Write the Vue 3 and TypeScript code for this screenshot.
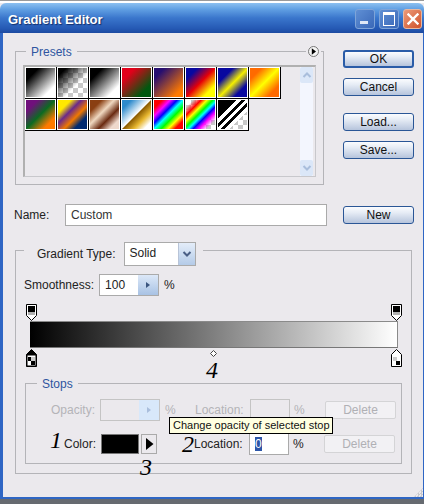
<script setup lang="ts">
const checker = 'conic-gradient(#c8c8c8 25%,#fff 0 50%,#c8c8c8 0 75%,#fff 0) 0 0/10px 10px'
const swatches: string[] = [
  'linear-gradient(135deg,#000 22%,#fff 80%)',
  `linear-gradient(135deg,#000 14%,rgba(0,0,0,0) 62%),${checker}`,
  'linear-gradient(135deg,#000 22%,#fff 80%)',
  'linear-gradient(135deg,#e2001a 22%,#00580f 78%)',
  'linear-gradient(135deg,#260e70 18%,#ff7a00 84%)',
  'linear-gradient(135deg,#0808a0 20%,#e60008 50%,#ffff00 80%)',
  'linear-gradient(135deg,#0808a0 26%,#f6f000 52%,#0808a0 78%)',
  'linear-gradient(135deg,#ff6a00 20%,#ffff00 50%,#ff6a00 80%)',
  'linear-gradient(135deg,#70107c 20%,#0c6a22 50%,#ff7a00 80%)',
  'linear-gradient(135deg,#ffe800 22%,#6a2a8a 40%,#f07800 60%,#002a70 78%)',
  'linear-gradient(135deg,#8a3f12 20%,#f0d8c0 42%,#6a2a10 64%,#efd9cc 84%)',
  'linear-gradient(135deg,#2d8acc 16%,#fff 49%,#8a5a00 51%,#e8b830 70%,#fff 88%)',
  'linear-gradient(135deg,#ff0000 14%,#ff00ff 28%,#0000ff 40%,#00ffff 50%,#00ff00 62%,#ffff00 74%,#ff0000 86%)',
  `linear-gradient(135deg,rgba(255,0,0,0) 12%,#ff0000 26%,#ffff00 36%,#00ff00 46%,#00ffff 54%,#0000ff 62%,#ff00ff 72%,rgba(255,0,255,0) 86%),${checker}`,
  `linear-gradient(135deg,#000 32%,#fff 32% 40%,#000 40% 47%,#fff 47% 55%,#000 55% 62%,#fff 62% 70%,rgba(0,0,0,0) 70%),${checker}`,
]
const sideButtons = [
  { label: 'OK', cls: 'default', gap: 'gap-s' },
  { label: 'Cancel', cls: '', gap: 'gap-l' },
  { label: 'Load...', cls: '', gap: 'gap-s' },
  { label: 'Save...', cls: '', gap: '' },
]
</script>

<template>
  <div class="window">
    <div class="strip"></div>
    <header class="titlebar">
      <span class="title">Gradient Editor</span>
      <div class="controls">
        <span class="ctl"><i class="min"></i></span>
        <span class="ctl"><i class="max"></i></span>
        <span class="ctl close">
          <svg width="12" height="12" viewBox="0 0 12 12"><path d="M1.5 1.5 10.5 10.5M10.5 1.5 1.5 10.5" stroke="#fff" stroke-width="2.4" stroke-linecap="square" /></svg>
        </span>
      </div>
    </header>

    <main class="body">
      <section class="top">
        <div class="group presets">
          <div class="legend-row">
            <span class="legend">Presets</span>
            <span class="menu-btn">
              <svg width="11" height="11" viewBox="0 0 11 11"><circle cx="5.5" cy="5.5" r="5" fill="#f4f4f4" stroke="#777" /><path d="M3.8 2.2 8 5.5 3.8 8.8Z" fill="#000" /></svg>
            </span>
          </div>
          <div class="listbox">
            <div class="swatch-grid">
              <div v-for="(s, i) in swatches" :key="i" class="cell">
                <div class="swatch" :style="{ background: s }"></div>
              </div>
            </div>
            <div class="scroll">
              <span class="scroll-btn">
                <svg width="10" height="8" viewBox="0 0 10 8"><path d="M1.5 6 5 2.5 8.5 6" fill="none" stroke="#a9bedc" stroke-width="2" /></svg>
              </span>
              <span class="scroll-btn">
                <svg width="10" height="8" viewBox="0 0 10 8"><path d="M1.5 2 5 5.5 8.5 2" fill="none" stroke="#a9bedc" stroke-width="2" /></svg>
              </span>
            </div>
          </div>
        </div>
        <div class="side">
          <button v-for="b in sideButtons" :key="b.label" class="btn" :class="[b.cls, b.gap]">{{ b.label }}</button>
        </div>
      </section>

      <section class="name-row">
        <label class="name-label">Name:</label>
        <div class="field name-input">Custom</div>
        <button class="btn new">New</button>
      </section>

      <section class="group gradient">
        <div class="type-row">
          <span>Gradient Type:</span>
          <div class="select">
            <span class="select-val">Solid</span>
            <span class="select-btn">
              <svg width="10" height="8" viewBox="0 0 10 8"><path d="M1.5 2 5 5.5 8.5 2" fill="none" stroke="#4a5f85" stroke-width="2" /></svg>
            </span>
          </div>
        </div>

        <div class="smooth-row">
          <span>Smoothness:</span>
          <div class="field spin">
            <span class="spin-val">100</span>
            <span class="spin-btn">
              <svg width="6" height="8" viewBox="0 0 6 8"><path d="M1 1 5 4 1 7Z" fill="#3b557f" /></svg>
            </span>
          </div>
          <span>%</span>
        </div>

        <div class="bar-area">
          <div class="bar"></div>
          <svg class="stop st-tl" width="11" height="17" viewBox="0 0 11 17">
            <path d="M.5.5h10v11l-5 5-5-5Z" fill="#fff" stroke="#000" />
            <rect x="2" y="2" width="7" height="6" fill="#000" />
            <rect x="2" y="8" width="7" height="3" fill="#b0b0b0" />
          </svg>
          <svg class="stop st-tr" width="11" height="17" viewBox="0 0 11 17">
            <path d="M.5.5h10v11l-5 5-5-5Z" fill="#fff" stroke="#000" />
            <rect x="2" y="2" width="7" height="6" fill="#000" />
            <rect x="2" y="8" width="7" height="3" fill="#b0b0b0" />
          </svg>
          <svg class="stop st-bl" width="11" height="18" viewBox="0 0 11 18">
            <path d="M5.5.5l5 5v12H.5v-12Z" fill="#000" stroke="#000" />
            <rect x="1.500" y="6.500" width="8" height="10" fill="#fff" />
            <rect x="2" y="8" width="4" height="4" fill="#000" />
            <rect x="5" y="12" width="4" height="4" fill="#000" />
            <rect x="5" y="8" width="4" height="4" fill="#ccc" />
          </svg>
          <svg class="stop st-br" width="11" height="18" viewBox="0 0 11 18">
            <path d="M5.5.5l5 5v12H.5v-12Z" fill="#fff" stroke="#000" />
            <rect x="2" y="8" width="4" height="4" fill="#ccc" />
            <rect x="5" y="12" width="4" height="4" fill="#000" />
          </svg>
          <svg class="stop st-mid" width="7" height="7" viewBox="0 0 7 7"><path d="M3.5.5l3 3-3 3-3-3Z" fill="#fff" stroke="#444" /></svg>
        </div>

        <div class="group stops">
          <span class="legend stops-legend">Stops</span>
          <div class="stop-row r1">
            <span class="lab dim">Opacity:</span>
            <div class="field val dimbox spin">
              <span class="spin-val"></span>
              <span class="spin-btn dim-btn">
                <svg width="6" height="8" viewBox="0 0 6 8"><path d="M1 1 5 4 1 7Z" fill="#a9bedc" /></svg>
              </span>
            </div>
            <span class="pct dim">%</span>
            <span class="loc dim">Location:</span>
            <div class="field locbox dimbox"></div>
            <span class="pct2 dim">%</span>
            <button class="del">Delete</button>
          </div>
          <div class="stop-row r2">
            <span class="lab">Color:</span>
            <div class="color-well"></div>
            <span class="color-arrow">
              <svg width="9" height="12" viewBox="0 0 9 12"><path d="M1 0 8.500 6 1 12Z" fill="#000" /></svg>
            </span>
            <span class="loc">Location:</span>
            <div class="field locbox"><span class="sel">0</span></div>
            <span class="pct2">%</span>
            <button class="del">Delete</button>
          </div>
        </div>
      </section>
    </main>
    <div class="under"></div>

    <span class="note n1">1</span>
    <span class="note n2">2</span>
    <span class="note n3">3</span>
    <span class="note n4">4</span>
    <div class="tooltip">Change opacity of selected stop</div>
    <div class="grip"></div>
  </div>
</template>

<style scoped>
.window {
  position: relative;
  width: 424px;
  height: 504px;
  display: flex;
  flex-direction: column;
  overflow: hidden;
  background: #ebe9ed;
  font-family: "Liberation Sans", Arial, sans-serif;
  font-size: 12px;
  color: #222;
}
.strip {
  height: 3px;
  background: linear-gradient(#9a9a9a 0 1px, #fff 1px);
}
.titlebar {
  height: 30px;
  flex: none;
  display: flex;
  align-items: center;
  justify-content: space-between;
  padding: 2px 2px 0 8px;
  box-sizing: border-box;
  border-radius: 6px 6px 0 0;
  background: linear-gradient(#8cc0f0 0, #5f9ee2 22%, #3a76cc 50%, #2559b4 85%, #1c4aa0 100%);
}
.title {
  font-size: 13px;
  font-weight: bold;
  color: #fff;
  text-shadow: 1px 1px 1px #14306c;
}
.controls {
  display: flex;
  gap: 4px;
  margin-top: -1px;
}
.ctl {
  width: 20px;
  height: 20px;
  box-sizing: border-box;
  display: flex;
  align-items: center;
  justify-content: center;
  border-radius: 3px;
  border: 1px solid #7fa4d8;
  background: linear-gradient(135deg, #5f8fd4, #3a68b8);
}
.ctl.close {
  width: 19px;
  background: linear-gradient(135deg, #ec9a78, #d0522c);
  border-color: #e8b8a0;
}
.min {
  width: 8px;
  height: 3px;
  margin-top: 8px;
  margin-right: 2px;
  background: #dfe8f6;
}
.max {
  width: 10px;
  height: 10px;
  border: 1px solid #fff;
  border-top-width: 3px;
}
.body {
  flex: 1;
  min-height: 0;
  box-sizing: border-box;
  padding: 18px 0 0 12px;
  border-left: 3px solid #2f66c4;
  border-right: 1px solid #2f66c4;
  border-bottom: 2px solid #2f66c4;
}
.under {
  height: 5px;
  flex: none;
  background: #666a70;
}
.group {
  box-sizing: border-box;
  border: 1px solid #b4b4b8;
}
.top {
  display: flex;
  align-items: flex-start;
}
.presets {
  width: 309px;
  height: 134px;
  padding: 0 7px;
}
.legend-row {
  height: 13px;
  display: flex;
  justify-content: space-between;
  align-items: flex-start;
  margin-top: -7px;
  margin-bottom: 7px;
}
.legend {
  padding: 0 5px;
  margin-left: 3px;
  line-height: 14px;
  color: #2f55a0;
  background: #ebe9ed;
}
.menu-btn {
  display: flex;
  margin-top: 1px;
  padding: 0 2px;
  margin-right: -5px;
  background: #ebe9ed;
}
.listbox {
  box-sizing: border-box;
  height: 112px;
  width: 293px;
  display: flex;
  border: 1px solid #c8c8cc;
  border-top: 2px solid #b0b0b0;
  border-left: 2px solid #b0b0b0;
}
.swatch-grid {
  width: 275px;
  display: flex;
  flex-wrap: wrap;
  align-content: flex-start;
}
.cell {
  width: 32px;
  height: 32px;
  box-sizing: border-box;
  border-right: 1px solid #000;
  border-bottom: 1px solid #000;
  background: #fff;
  padding: 1px;
}
.swatch {
  width: 100%;
  height: 100%;
}
.scroll {
  width: 13px;
  display: flex;
  flex-direction: column;
  justify-content: space-between;
  background: #f3f6fe;
}
.scroll-btn {
  height: 16px;
  display: flex;
  align-items: center;
  justify-content: center;
  background: #dbe7f8;
  border-radius: 2px;
}
.side {
  width: 71px;
  margin-left: 19px;
  margin-top: -1px;
  display: flex;
  flex-direction: column;
}
.btn {
  box-sizing: border-box;
  width: 71px;
  height: 18px;
  padding: 0;
  font: inherit;
  color: #111;
  border: 1px solid #2a5696;
  border-radius: 3px;
  background: linear-gradient(#fbfcfe 0, #e6ecf5 35%, #b6c4dc 100%);
}
.btn.default {
  border: 2px solid #2a5ca8;
}
.gap-s {
  margin-bottom: 10px;
}
.gap-l {
  margin-bottom: 17px;
}
.name-row {
  display: flex;
  align-items: center;
  margin-top: 19px;
  height: 22px;
}
.name-label {
  width: 51px;
  margin-left: -1px;
}
.field {
  box-sizing: border-box;
  border: 1px solid #aaa;
  background: #fff;
}
.name-input {
  width: 262px;
  height: 22px;
  line-height: 20px;
  padding-left: 5px;
  color: #333;
}
.new {
  margin-left: 16px;
}
.gradient {
  width: 397px;
  height: 224px;
  margin-top: 24px;
  padding: 0 8px;
}
.type-row {
  width: fit-content;
  box-sizing: border-box;
  height: 24px;
  display: flex;
  align-items: center;
  gap: 8px;
  margin-top: -9px;
  padding: 0 7px 0 13px;
  background: #ebe9ed;
}
.select {
  width: 72px;
  height: 24px;
  box-sizing: border-box;
  display: flex;
  border: 1px solid #aaa;
  background: #fff;
}
.select-val {
  flex: 1;
  padding-left: 5px;
  line-height: 20px;
}
.select-btn {
  width: 16px;
  display: flex;
  align-items: center;
  justify-content: center;
  background: linear-gradient(#e4edf9, #b4cbe8);
  border-left: 1px solid #b8c4d8;
}
.smooth-row {
  display: flex;
  align-items: center;
  gap: 5px;
  height: 22px;
  margin-top: 8px;
}
.spin {
  width: 60px;
  height: 22px;
  display: flex;
}
.spin-val {
  flex: 1;
  padding-left: 5px;
  line-height: 20px;
}
.spin-btn {
  width: 20px;
  display: flex;
  align-items: center;
  justify-content: center;
  background: linear-gradient(#dce8f8, #a8c2e4);
}
.dim-btn {
  background: #d8e8fa;
}
.bar-area {
  position: relative;
  height: 79px;
  margin-top: 8px;
  padding-top: 18px;
  box-sizing: border-box;
}
.bar {
  box-sizing: border-box;
  width: 368px;
  height: 27px;
  margin-top: -1px;
  margin-left: 6px;
  border: 1px solid #8a8a8a;
  border-left: 0;
  border-bottom-color: #777;
  background: linear-gradient(90deg, #000, #fff);
}
.stop {
  position: absolute;
}
.st-tl { left: 2px; top: 0; }
.st-tr { left: 367px; top: 0; }
.st-bl { left: 2px; top: 45px; }
.st-br { left: 367px; top: 45px; }
.st-mid { left: 186px; top: 46px; }
.stops {
  width: 377px;
  height: 81px;
  margin-left: 1px;
  padding-left: 1px;
}
.stops-legend {
  display: block;
  width: fit-content;
  height: 13px;
  margin-top: -7px;
  margin-left: 10px;
}
.stop-row {
  display: flex;
  align-items: center;
  height: 22px;
}
.r1 { margin-top: 9px; }
.r2 { margin-top: 12px; }
.lab {
  width: 68px;
  margin-right: 5px;
  text-align: right;
}
.r2 .lab {
  width: 69px;
}
.dim {
  color: #b4b4b8;
}
.dimbox {
  background: #ebe9ed;
  border-color: #c4c4c4;
}
.val { width: 60px; }
.pct {
  width: 30px;
  margin-left: 5px;
}
.loc {
  width: 50px;
  margin-right: 5px;
}
.locbox {
  width: 40px;
  height: 22px;
  padding-left: 5px;
  line-height: 20px;
}
.pct2 {
  width: 31px;
  margin-left: 4px;
}
.del {
  box-sizing: border-box;
  width: 71px;
  height: 18px;
  padding: 0;
  font: inherit;
  color: #b0b0b4;
  background: #f2f1f4;
  border: 1px solid #d4d4d6;
  border-radius: 2px;
}
.color-well {
  width: 38px;
  height: 20px;
  background: #000;
  border: 1px solid #777;
  box-sizing: border-box;
}
.color-arrow {
  box-sizing: border-box;
  width: 16px;
  height: 20px;
  margin: 0 37px 0 2px;
  display: flex;
  align-items: center;
  justify-content: center;
  border: 1px solid #aaa;
}
.sel {
  display: inline-block;
  width: 7px;
  line-height: 14px;
  color: #fff;
  background: #2c55a8;
}
.note {
  position: absolute;
  font-family: "Liberation Serif", "Times New Roman", serif;
  font-style: italic;
  font-size: 24px;
  line-height: 24px;
  color: #000;
}
.n1 { left: 50px; top: 428px; }
.n2 { left: 182px; top: 432px; }
.n3 { left: 140px; top: 455px; }
.n4 { left: 206px; top: 358px; }
.tooltip {
  position: absolute;
  left: 169px;
  top: 417px;
  width: 164px;
  height: 17px;
  box-sizing: border-box;
  padding-left: 3px;
  line-height: 15px;
  font-size: 11px;
  white-space: nowrap;
  color: #111;
  background: #ffffe1;
  border: 1px solid #000;
}
.grip {
  position: absolute;
  right: 1px;
  bottom: 7px;
  width: 9px;
  height: 9px;
  background: conic-gradient(#c8c8cc 25%, transparent 0 50%, #c8c8cc 0 75%, transparent 0) 0 0/3px 3px;
  clip-path: polygon(100% 0, 100% 100%, 0 100%);
}
</style>
